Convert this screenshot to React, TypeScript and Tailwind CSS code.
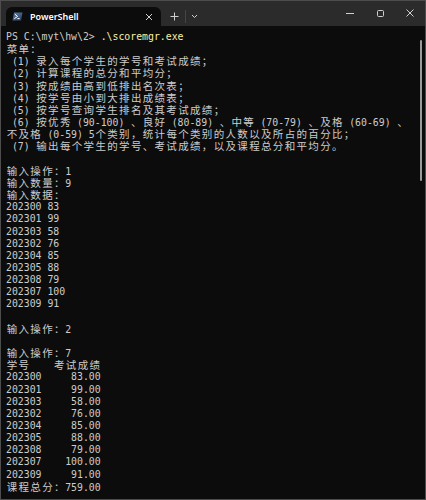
import React from 'react';

const MONO = "font-['DejaVu_Sans_Mono','Liberation_Mono',monospace]";
const CJK = "font-['Noto_Sans_CJK_SC','Noto_Sans',sans-serif]";

// terminal output, one entry per row
const LINES: string[] = [
  '',
  '菜单：',
  ' (1) 录入每个学生的学号和考试成绩；',
  ' (2) 计算课程的总分和平均分；',
  ' (3) 按成绩由高到低排出名次表；',
  ' (4) 按学号由小到大排出成绩表；',
  ' (5) 按学号查询学生排名及其考试成绩；',
  ' (6) 按优秀 (90-100) 、良好 (80-89) 、中等 (70-79) 、及格 (60-69) 、',
  '不及格 (0-59) 5个类别，统计每个类别的人数以及所占的百分比；',
  ' (7) 输出每个学生的学号、考试成绩，以及课程总分和平均分。',
  '',
  '输入操作：1',
  '输入数量：9',
  '输入数据：',
  '202300 83',
  '202301 99',
  '202303 58',
  '202302 76',
  '202304 85',
  '202305 88',
  '202308 79',
  '202307 100',
  '202309 91',
  '',
  '输入操作：2',
  '',
  '输入操作：7',
  '学号    考试成绩',
  '202300     83.00',
  '202301     99.00',
  '202303     58.00',
  '202302     76.00',
  '202304     85.00',
  '202305     88.00',
  '202308     79.00',
  '202307    100.00',
  '202309     91.00',
  '课程总分：759.00',
];

const isWide = (ch: string) => ch.charCodeAt(0) > 0x2e80;

// split a row into ascii runs and double-width cells
function TermText({ text }: { text: string }) {
  const out: React.ReactNode[] = [];
  let run = '';
  Array.from(text).forEach((ch, i) => {
    if (isWide(ch)) {
      if (run) {
        out.push(<span key={`r${i}`}>{run}</span>);
        run = '';
      }
      out.push(
        <span key={i} className={`${CJK} inline-block w-[11.84px] text-center text-[10.5px]`}>
          {ch}
        </span>
      );
    } else {
      run += ch;
    }
  });
  if (run) out.push(<span key="end">{run}</span>);
  return <>{out}</>;
}

function PwshIcon() {
  return (
    <svg width="11" height="9" viewBox="0 0 11 9">
      <defs>
        <linearGradient id="pw" x1="0" y1="0" x2="1" y2="1">
          <stop offset="0" stopColor="#5b7fa8" />
          <stop offset="1" stopColor="#2a3f5c" />
        </linearGradient>
      </defs>
      <path d="M2 0.5 H10.5 L9 8.5 H0.5 Z" fill="url(#pw)" />
      <path d="M3 2.3 L5.6 4.4 L2.4 6.6" stroke="#fff" strokeWidth="1" fill="none" />
      <path d="M5.4 6.6 H7.6" stroke="#fff" strokeWidth="1" />
    </svg>
  );
}

export default function App() {
  return (
    <div className="w-[426px] h-[500px] bg-[#0c0c0c] border border-[#4d4d4d] flex flex-col overflow-hidden">
      {/* Title bar */}
      <div className="h-[25px] shrink-0 bg-[#2b2b2b] flex items-end">
        <div className="ml-[5px] w-[155px] h-[19px] bg-[#0c0c0c] rounded-t-[6px] flex items-center pl-[6px] pr-[8px]">
          <PwshIcon />
          <span className="ml-[7px] text-[9px] font-semibold text-white font-['Noto_Sans',sans-serif] leading-none">
            PowerShell
          </span>
          <svg className="ml-auto" width="8" height="8" viewBox="0 0 8 8">
            <path d="M1 1 L7 7 M7 1 L1 7" stroke="#d0d0d0" strokeWidth="1" />
          </svg>
        </div>
        <div className="h-[19px] flex items-center">
          <svg className="ml-[9px]" width="9" height="9" viewBox="0 0 9 9">
            <path d="M4.5 0.5 V8.5 M0.5 4.5 H8.5" stroke="#d0d0d0" strokeWidth="1" />
          </svg>
          <div className="ml-[6px] w-px h-[13px] bg-[#454545]" />
          <svg className="ml-[5px]" width="7" height="5" viewBox="0 0 7 5">
            <path d="M1 1 L3.5 3.5 L6 1" stroke="#d0d0d0" strokeWidth="1" fill="none" />
          </svg>
        </div>
        <div className="flex-1" />
        <div className="self-stretch flex items-center pb-[1px]">
          <div className="w-[30px] flex justify-center">
            <div className="w-[8px] h-px bg-[#d0d0d0]" />
          </div>
          <div className="w-[30px] flex justify-center">
            <div className="w-[7px] h-[7px] border border-[#d0d0d0] rounded-[1.5px]" />
          </div>
          <div className="w-[30px] flex justify-center pr-[1px]">
            <svg width="8" height="8" viewBox="0 0 8 8">
              <path d="M0.5 0.5 L7.5 7.5 M7.5 0.5 L0.5 7.5" stroke="#d0d0d0" strokeWidth="1" />
            </svg>
          </div>
        </div>
      </div>

      {/* Terminal body */}
      <div className={`relative flex-1 pl-[5px] pt-[5px] ${MONO} text-[9.83px] text-[#cccccc]`}>
        <div className="h-[12.16px] leading-[12.16px] whitespace-pre">
          <span>PS C:\myt\hw\2&gt; </span>
          <span className="text-[#f9f1a5]">.\scoremgr.exe</span>
        </div>
        {LINES.slice(1).map((line, i) => (
          <div key={i} className="h-[12.16px] leading-[12.16px] whitespace-pre">
            <TermText text={line} />
          </div>
        ))}
        <div className="absolute right-[3px] top-[14px] w-[2px] h-[141px] bg-[#9b9b9b] rounded-full" />
      </div>
    </div>
  );
}
